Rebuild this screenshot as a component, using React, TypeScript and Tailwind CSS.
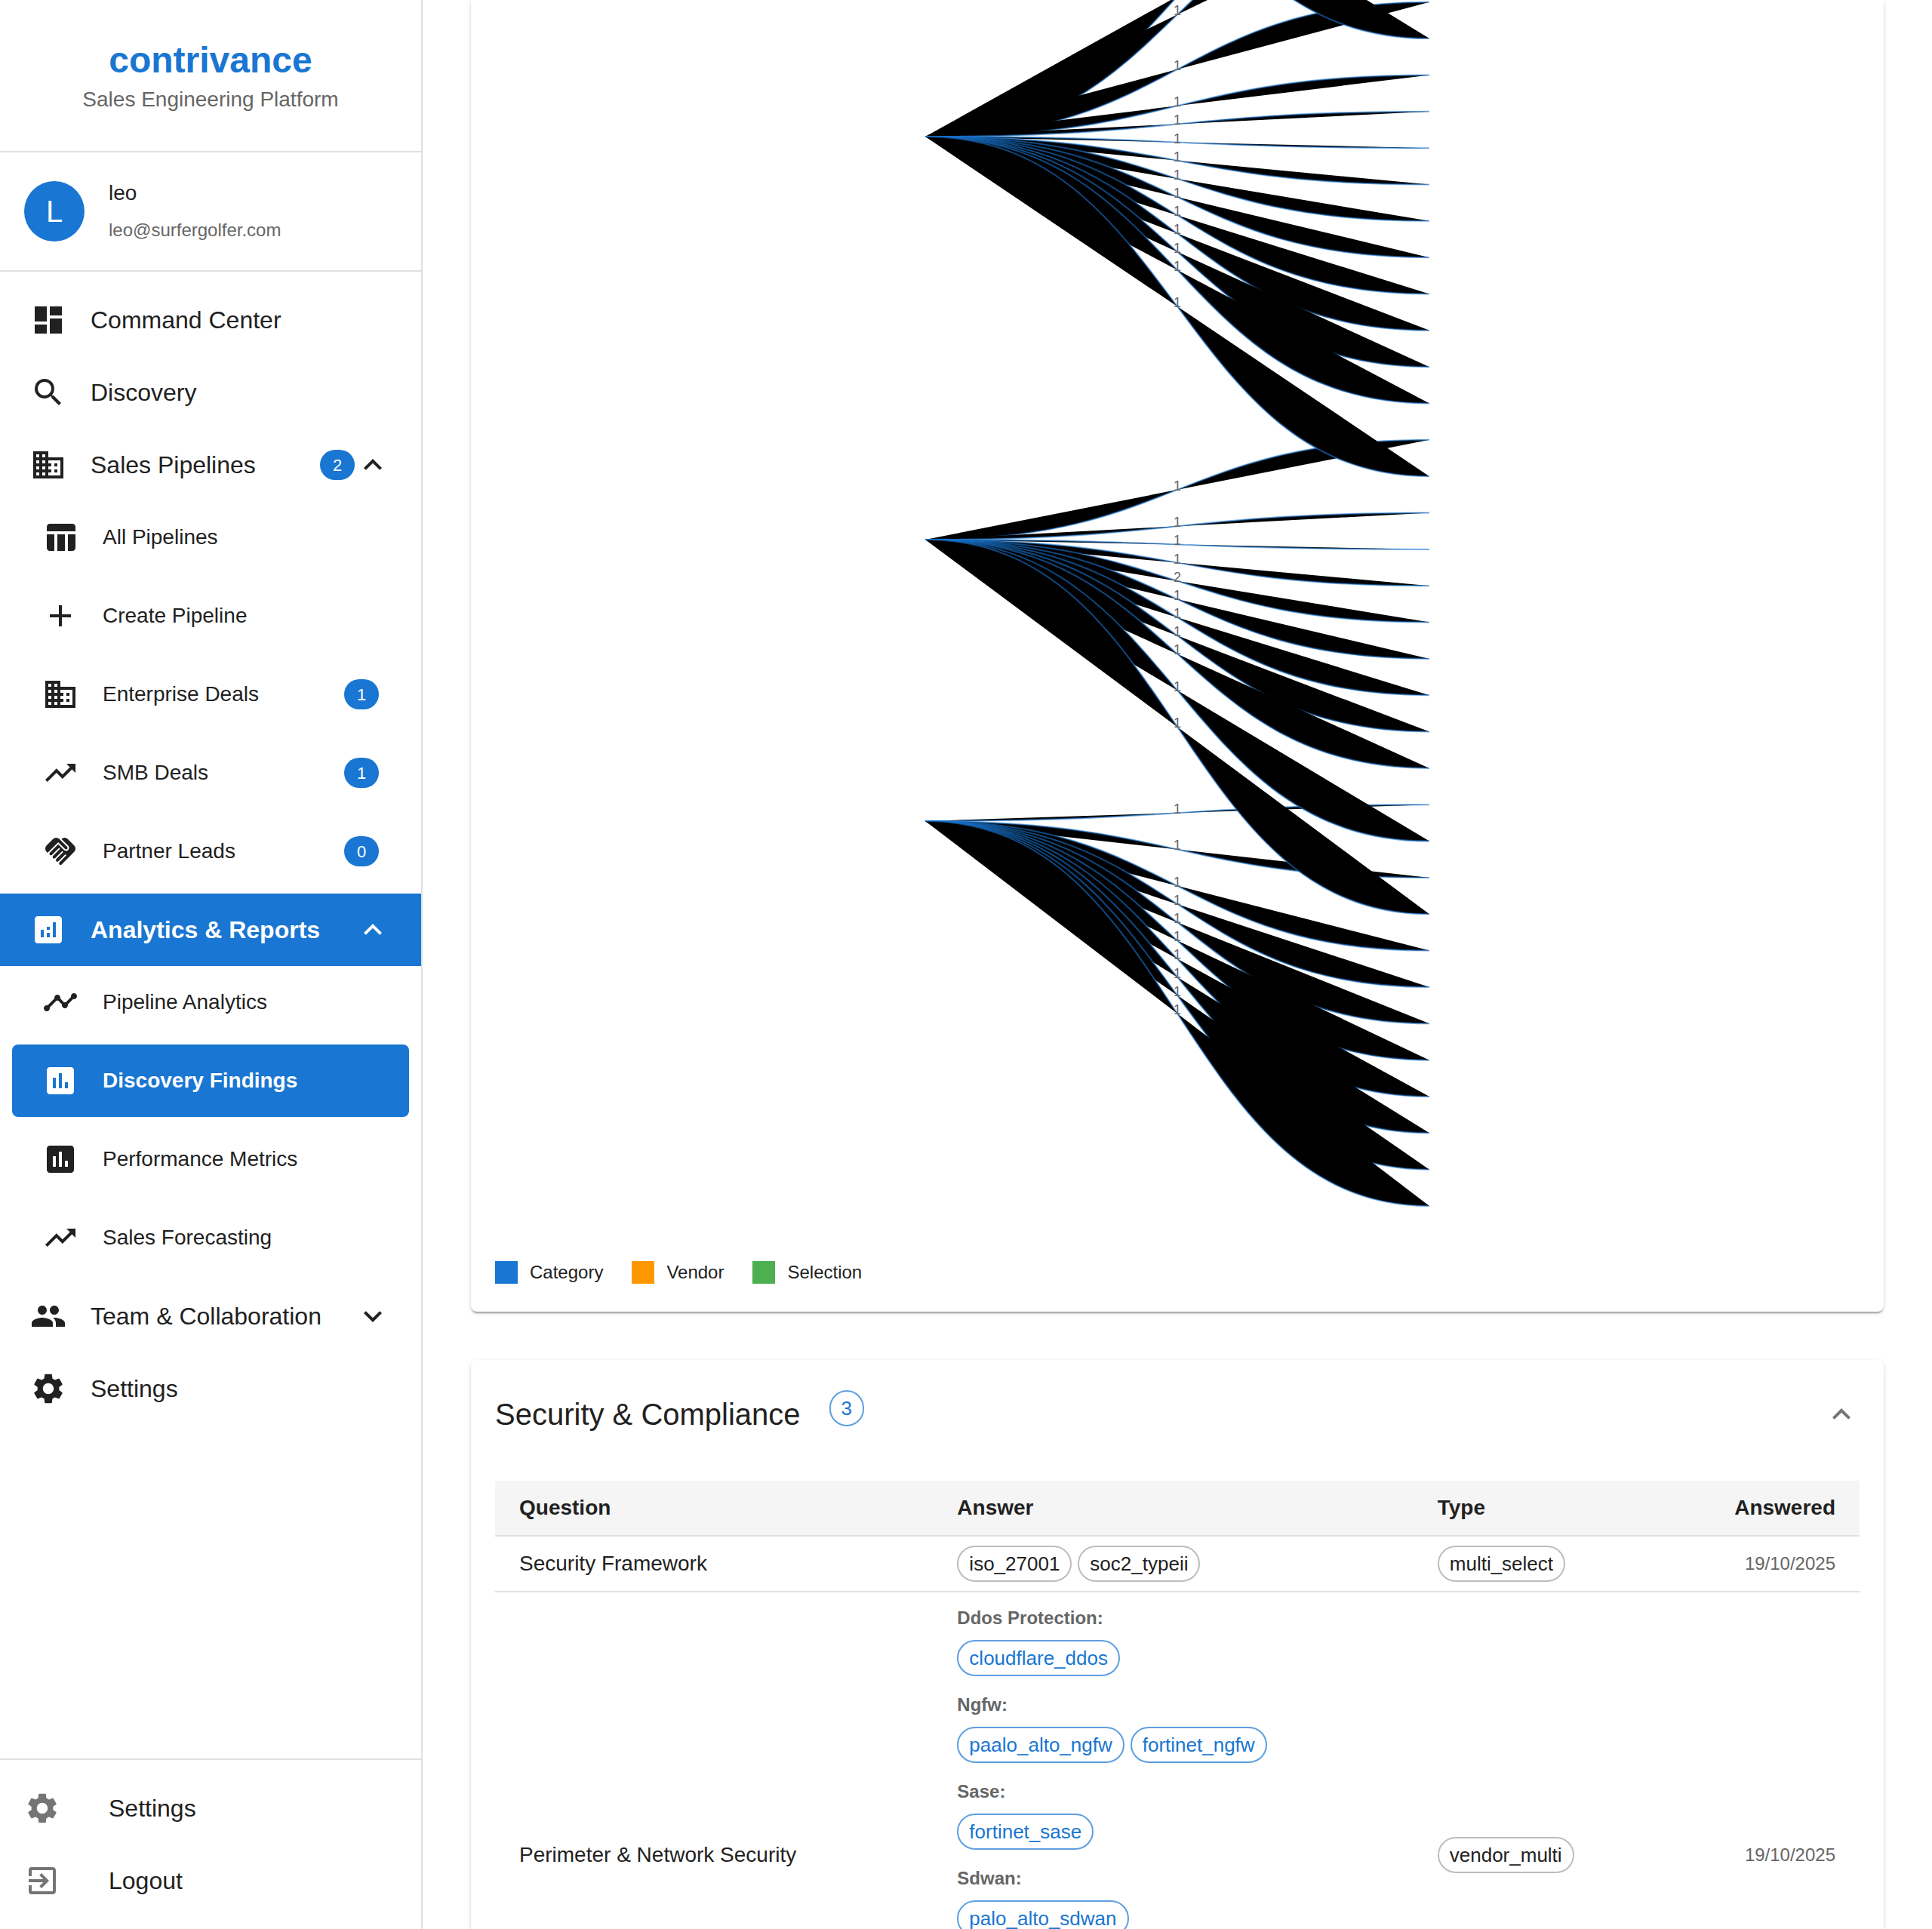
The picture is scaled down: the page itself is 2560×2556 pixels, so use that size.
import type { ComponentType, ReactNode } from "react";
import {
  MdAdd,
  MdAnalytics,
  MdAssessment,
  MdBusiness,
  MdDashboard,
  MdExitToApp,
  MdExpandLess,
  MdExpandMore,
  MdHandshake,
  MdPeople,
  MdSearch,
  MdSettings,
  MdTableChart,
  MdTimeline,
  MdTrendingUp,
} from "react-icons/md";

type Icon = ComponentType<{ className?: string }>;

function Count({ value }: { value: number }) {
  return (
    <span className="flex h-10 w-[46px] shrink-0 items-center justify-center rounded-full bg-[#1976d2] text-[22px] text-white">
      {value}
    </span>
  );
}

type NavItemProps = { icon: Icon; label: string; active?: boolean; count?: number };

function NavLink({ icon: I, label }: NavItemProps) {
  return (
    <a href="#" className="flex h-24 items-center px-10 text-[32px]">
      <I className="mr-8 size-12 shrink-0" />
      <span className="flex-1">{label}</span>
    </a>
  );
}

function NavGroup({
  icon: I,
  label,
  active,
  count,
  open,
  children,
}: NavItemProps & { open: boolean; children?: ReactNode }) {
  const Chevron = open ? MdExpandLess : MdExpandMore;
  return (
    <>
      <button
        type="button"
        aria-expanded={open}
        className={`flex h-24 w-full items-center px-10 text-left text-[32px] whitespace-nowrap ${
          active ? "bg-[#1976d2] font-bold text-white" : ""
        }`}
      >
        <I className="mr-8 size-12 shrink-0" />
        <span className="flex-1">{label}</span>
        {count !== undefined && <Count value={count} />}
        <Chevron className="size-12 shrink-0" />
      </button>
      {children}
    </>
  );
}

function SubLink({ icon: I, label, active, count }: NavItemProps) {
  return (
    <a
      href="#"
      aria-current={active ? "page" : undefined}
      className={`mx-4 mb-2 flex h-24 items-center rounded-lg px-10 text-[28px] ${
        active ? "bg-[#1976d2] font-bold text-white" : ""
      }`}
    >
      <I className="mr-8 size-12 shrink-0" />
      <span className="flex-1">{label}</span>
      {count !== undefined && <Count value={count} />}
    </a>
  );
}

function Sidebar() {
  return (
    <aside className="flex w-[560px] shrink-0 flex-col border-r-2 border-[#e0e0e0]">
      <header className="border-b-2 border-[#e0e0e0] p-12 text-center">
        <h1 className="text-[48px] leading-[64px] font-bold text-[#1976d2]">contrivance</h1>
        <p className="text-[28px] leading-10 text-[#666666]">Sales Engineering Platform</p>
      </header>
      <div className="flex items-center gap-8 border-b-2 border-[#e0e0e0] p-8">
        <div className="flex size-20 items-center justify-center rounded-full bg-[#1976d2] text-[40px] text-white">
          L
        </div>
        <div>
          <p className="text-[28px] leading-[44px]">leo</p>
          <p className="pt-[6px] text-[24px] leading-[42px] text-[#666666]">leo@surfergolfer.com</p>
        </div>
      </div>
      <nav className="flex-1 py-4">
        <NavLink icon={MdDashboard} label="Command Center" />
        <NavLink icon={MdSearch} label="Discovery" />
        <NavGroup icon={MdBusiness} label="Sales Pipelines" count={2} open>
          <SubLink icon={MdTableChart} label="All Pipelines" />
          <SubLink icon={MdAdd} label="Create Pipeline" />
          <SubLink icon={MdBusiness} label="Enterprise Deals" count={1} />
          <SubLink icon={MdTrendingUp} label="SMB Deals" count={1} />
          <SubLink icon={MdHandshake} label="Partner Leads" count={0} />
        </NavGroup>
        <NavGroup icon={MdAnalytics} label="Analytics &amp; Reports" active open>
          <SubLink icon={MdTimeline} label="Pipeline Analytics" />
          <SubLink icon={MdAssessment} label="Discovery Findings" active />
          <SubLink icon={MdAssessment} label="Performance Metrics" />
          <SubLink icon={MdTrendingUp} label="Sales Forecasting" />
        </NavGroup>
        <NavGroup icon={MdPeople} label="Team &amp; Collaboration" open={false} />
        <NavLink icon={MdSettings} label="Settings" />
      </nav>
      <div className="border-t-2 border-[#e0e0e0] py-4">
        <a href="#" className="flex h-24 items-center gap-16 px-8 text-[32px]">
          <MdSettings className="size-12 text-[#757575]" />
          Settings
        </a>
        <button type="button" className="flex h-24 w-full items-center gap-16 px-8 text-left text-[32px]">
          <MdExitToApp className="size-12 text-[#757575]" />
          Logout
        </button>
      </div>
    </aside>
  );
}

/* Flow chart: vendor nodes on the left, selection slots stacked on the right. */
const SOURCE_X = 570;
const TARGET_X = 1238;
const MID_X = (SOURCE_X + TARGET_X) / 2;
const LAST_SLOT_Y = 1598;
const SLOT_STEP = 48.34;

const sources = [
  { y: -360, slots: [32] },
  { y: 181, slots: [37, 36, 33, 31, 30, 29, 28, 27, 26, 25, 24, 23, 22, 20] },
  { y: 715, slots: [21, 19, 18, 17, 16, 15, 14, 13, 12, 10, 8] },
  { y: 1088, slots: [11, 9, 7, 6, 5, 4, 3, 2, 1, 0] },
];

const links = sources
  .flatMap((s) =>
    s.slots.map((slot) => ({
      slot,
      from: s.y,
      to: LAST_SLOT_Y - slot * SLOT_STEP,
      value: slot === 16 ? 2 : 1,
    })),
  )
  .sort((a, b) => b.slot - a.slot);

const labelled = links.filter((l) => l.from + l.to > 0);

function FlowChart() {
  return (
    <svg viewBox="0 0 1808 1634" className="block w-full" role="img" aria-label="Vendor selection flow">
      {links.map((l) => (
        <path
          key={l.slot}
          d={`M${SOURCE_X},${l.from}C${MID_X},${l.from} ${MID_X},${l.to} ${TARGET_X},${l.to}`}
          stroke="#1976d2"
          strokeOpacity={0.6}
          strokeWidth={2}
        />
      ))}
      {labelled.map((l) => (
        <text key={l.slot} x={MID_X} y={(l.from + l.to) / 2 + 1} textAnchor="middle" fontSize={18} fill="#666666">
          {l.value}
        </text>
      ))}
    </svg>
  );
}

function LegendItem({ swatch, label }: { swatch: string; label: string }) {
  return (
    <li className="flex items-center gap-4">
      <span className={`size-[30px] ${swatch}`} />
      {label}
    </li>
  );
}

function Chip({ children, primary }: { children: ReactNode; primary?: boolean }) {
  return (
    <span
      className={`inline-flex h-12 items-center rounded-full border-2 px-[14px] text-[26px] leading-none ${
        primary ? "border-[#5e9fe0] text-[#1976d2]" : "border-[#bdbdbd]"
      }`}
    >
      {children}
    </span>
  );
}

const vendorGroups = [
  { name: "Ddos Protection:", items: ["cloudflare_ddos"] },
  { name: "Ngfw:", items: ["paalo_alto_ngfw", "fortinet_ngfw"] },
  { name: "Sase:", items: ["fortinet_sase"] },
  { name: "Sdwan:", items: ["palo_alto_sdwan"] },
];

const cardShadow =
  "shadow-[0_4px_2px_-2px_rgba(0,0,0,0.2),0_2px_2px_0_rgba(0,0,0,0.14),0_2px_6px_0_rgba(0,0,0,0.12)]";

export default function App() {
  return (
    <div className="flex h-screen overflow-hidden bg-white font-['Liberation_Sans',Arial,sans-serif] text-[#212121]">
      <Sidebar />
      <main className="flex h-screen min-w-0 flex-1 flex-col gap-16 overflow-hidden px-16">
        <section className={`shrink-0 rounded-b-lg bg-white px-8 pb-8 ${cardShadow}`}>
          <FlowChart />
          <ul className="mt-8 flex gap-[38px] text-[24px] leading-10">
            <LegendItem swatch="bg-[#1976d2]" label="Category" />
            <LegendItem swatch="bg-[#ff9800]" label="Vendor" />
            <LegendItem swatch="bg-[#4caf50]" label="Selection" />
          </ul>
        </section>

        <section className={`shrink-0 rounded-lg bg-white p-8 ${cardShadow}`}>
          <div className="mb-12 flex h-20 items-center justify-between">
            <div className="flex items-start gap-[38px]">
              <h2 className="text-[40px] leading-[64px]">Security &amp; Compliance</h2>
              <Chip primary>3</Chip>
            </div>
            <button type="button" aria-label="Collapse section" className="text-[#757575]">
              <MdExpandLess className="size-12" />
            </button>
          </div>
          <table className="w-full table-fixed border-collapse text-left text-[28px] leading-[48px]">
            <thead>
              <tr className="border-b-2 border-[#e0e0e0] bg-[#f5f5f5]">
                <th className="w-[32.1%] px-8 py-3 font-bold">Question</th>
                <th className="w-[35.2%] px-8 py-3 font-bold">Answer</th>
                <th className="w-[16%] px-8 py-3 font-bold">Type</th>
                <th className="px-8 py-3 text-right font-bold">Answered</th>
              </tr>
            </thead>
            <tbody>
              <tr className="border-b-2 border-[#e0e0e0]">
                <td className="px-8 py-3">Security Framework</td>
                <td className="px-8 py-3">
                  <div className="flex gap-2">
                    <Chip>iso_27001</Chip>
                    <Chip>soc2_typeii</Chip>
                  </div>
                </td>
                <td className="px-8 py-3">
                  <div className="flex">
                    <Chip>multi_select</Chip>
                  </div>
                </td>
                <td className="px-8 py-3 text-right text-[24px] text-[#666666]">19/10/2025</td>
              </tr>
              <tr className="h-[698px] border-b-2 border-[#e0e0e0]">
                <td className="px-8 py-3">Perimeter &amp; Network Security</td>
                <td className="px-8 py-3 align-top">
                  <div className="flex flex-col gap-4">
                    {vendorGroups.map((g) => (
                      <div key={g.name}>
                        <p className="text-[24px] leading-[44px] font-bold text-[#666666]">{g.name}</p>
                        <div className="mt-[7px] flex gap-2">
                          {g.items.map((item) => (
                            <Chip key={item} primary>
                              {item}
                            </Chip>
                          ))}
                        </div>
                      </div>
                    ))}
                  </div>
                </td>
                <td className="px-8 py-3">
                  <div className="flex">
                    <Chip>vendor_multi</Chip>
                  </div>
                </td>
                <td className="px-8 py-3 text-right text-[24px] text-[#666666]">19/10/2025</td>
              </tr>
            </tbody>
          </table>
        </section>
      </main>
    </div>
  );
}
